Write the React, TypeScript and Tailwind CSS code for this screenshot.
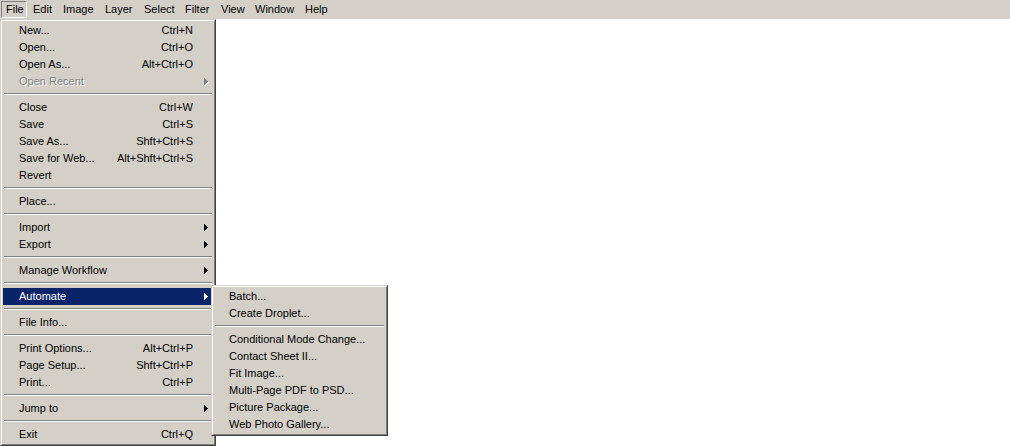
import React from "react";

type Item =
  | { sep: true }
  | { sep?: false; label: string; shortcut?: string; sub?: boolean; disabled?: boolean; active?: boolean };

const fileMenu: Item[] = [
  { label: "New...", shortcut: "Ctrl+N" },
  { label: "Open...", shortcut: "Ctrl+O" },
  { label: "Open As...", shortcut: "Alt+Ctrl+O" },
  { label: "Open Recent", sub: true, disabled: true },
  { sep: true },
  { label: "Close", shortcut: "Ctrl+W" },
  { label: "Save", shortcut: "Ctrl+S" },
  { label: "Save As...", shortcut: "Shft+Ctrl+S" },
  { label: "Save for Web...", shortcut: "Alt+Shft+Ctrl+S" },
  { label: "Revert" },
  { sep: true },
  { label: "Place..." },
  { sep: true },
  { label: "Import", sub: true },
  { label: "Export", sub: true },
  { sep: true },
  { label: "Manage Workflow", sub: true },
  { sep: true },
  { label: "Automate", sub: true, active: true },
  { sep: true },
  { label: "File Info..." },
  { sep: true },
  { label: "Print Options...", shortcut: "Alt+Ctrl+P" },
  { label: "Page Setup...", shortcut: "Shft+Ctrl+P" },
  { label: "Print...", shortcut: "Ctrl+P" },
  { sep: true },
  { label: "Jump to", sub: true },
  { sep: true },
  { label: "Exit", shortcut: "Ctrl+Q" },
];

const autoMenu: Item[] = [
  { label: "Batch..." },
  { label: "Create Droplet..." },
  { sep: true },
  { label: "Conditional Mode Change..." },
  { label: "Contact Sheet II..." },
  { label: "Fit Image..." },
  { label: "Multi-Page PDF to PSD..." },
  { label: "Picture Package..." },
  { label: "Web Photo Gallery..." },
];

const bar = [
  { label: "File", w: "w-[27px]" },
  { label: "Edit", w: "w-[30px]" },
  { label: "Image", w: "w-[42px]" },
  { label: "Layer", w: "w-[39px]" },
  { label: "Select", w: "w-[41px]" },
  { label: "Filter", w: "w-[36px]" },
  { label: "View", w: "w-[34px]" },
  { label: "Window", w: "w-[50px]" },
  { label: "Help", w: "w-[31px]" },
];

function Arrow({ color }: { color: string }) {
  return (
    <svg width="4" height="7" viewBox="0 0 4 7" shapeRendering="crispEdges" className="block">
      <path d="M0 0h1v7h-1z M1 1h1v5h-1z M2 2h1v3h-1z M3 3h1v1h-1z" fill={color} />
    </svg>
  );
}

function Menu({ items, pl }: { items: Item[]; pl: string }) {
  return (
    <div className="border-t border-l border-t-[#d4d0c8] border-l-[#d4d0c8] border-b border-r border-b-[#404040] border-r-[#404040] bg-[#d4d0c8]">
      <div className="border-t border-l border-t-white border-l-white border-b border-r border-b-[#808080] border-r-[#808080] p-[1px]">
        {items.map((it, i) =>
          it.sep ? (
            <div key={i} className="h-[9px] pt-[3px] px-[1px]">
              <div className="h-[1px] bg-[#808080]" />
              <div className="h-[1px] bg-white" />
            </div>
          ) : (
            <div
              key={i}
              className={`h-[17px] flex items-center ${pl} ${
                it.active ? "bg-[#0a246a] text-white" : it.disabled ? "text-[#808080] [text-shadow:1px_1px_0_#fff]" : "text-black"
              }`}
            >
              <span className="flex-1 whitespace-nowrap leading-[17px]">{it.label}</span>
              {it.shortcut && <span className="whitespace-nowrap pr-[20px] leading-[17px]">{it.shortcut}</span>}
              {it.sub && (
                <span className="mr-[5px] relative">
                  {it.disabled && (
                    <span className="absolute left-[1px] top-[1px]">
                      <Arrow color="#ffffff" />
                    </span>
                  )}
                  <span className="relative">
                    <Arrow color={it.active ? "#ffffff" : it.disabled ? "#808080" : "#000000"} />
                  </span>
                </span>
              )}
            </div>
          )
        )}
      </div>
    </div>
  );
}

export default function App() {
  return (
    <div
      className="relative w-[1010px] h-[446px] bg-white overflow-hidden text-[11px] text-black"
      style={{ fontFamily: '"Liberation Sans", Arial, sans-serif' }}
    >
      <div className="h-[19px] bg-[#d4d0c8] flex">
        {bar.map((b, i) =>
          i === 0 ? (
            <div key={b.label} className={`${b.w} h-[19px] pl-[1px] pt-[1px]`}>
              <div className="w-[26px] h-[17px] border-t border-l border-t-[#808080] border-l-[#808080] border-b border-r border-b-white border-r-white pl-[4px] leading-[15px]">
                {b.label}
              </div>
            </div>
          ) : (
            <div key={b.label} className={`${b.w} h-[19px] pl-[6px] pt-[2px] leading-[15px] whitespace-nowrap`}>
              {b.label}
            </div>
          )
        )}
      </div>
      <div className="absolute left-0 top-[19px] w-[216px]">
        <Menu items={fileMenu} pl="pl-[16px]" />
      </div>
      <div className="absolute left-[211px] top-[285px] w-[177px]">
        <Menu items={autoMenu} pl="pl-[15px]" />
      </div>
    </div>
  );
}
